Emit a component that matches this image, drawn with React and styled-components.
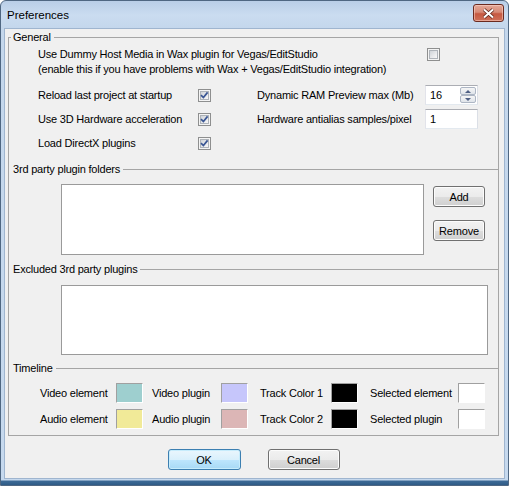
import React from "react";
import styled, { createGlobalStyle } from "styled-components";

const Global = createGlobalStyle`
  html, body {
    margin: 0;
    padding: 0;
    background: #ffffff;
  }
  body {
    font-family: "Liberation Sans", Arial, sans-serif;
    font-size: 11px;
    letter-spacing: -0.2px;
    color: #000;
  }
`;

const Window = styled.div`
  width: 509px;
  height: 486px;
  box-sizing: border-box;
  display: flex;
  flex-direction: column;
  border: 1px solid #4f6782;
  border-radius: 6px 6px 0 0;
  background: linear-gradient(
    to bottom,
    #b9cee7 0px,
    #cadcf0 14px,
    #c4d7ec 27px,
    #c6d9ee calc(100% - 5px),
    #3d6a96 calc(100% - 4px),
    #2f5b86 100%
  );
`;

const TitleBar = styled.div`
  height: 27px;
  flex: none;
  display: flex;
  align-items: flex-start;
  justify-content: space-between;
`;

const Title = styled.div`
  font-size: 11.5px;
  letter-spacing: 0;
  line-height: 14px;
  margin: 7px 0 0 6px;
  color: #000;
`;

const CloseButton = styled.div`
  width: 31px;
  height: 18px;
  margin: 3px 4px 0 0;
  box-sizing: border-box;
  border: 1px solid #6b2a1f;
  border-radius: 3px;
  background: linear-gradient(to bottom, #e4a898 0%, #d78a76 45%, #c65840 55%, #cf715a 100%);
  box-shadow: inset 0 0 0 1px rgba(255, 220, 210, 0.5);
  display: flex;
  align-items: center;
  justify-content: center;
`;

const Client = styled.div`
  flex: 1;
  margin: 0 3px 6px 3px;
  border: 1px solid #9fb5cf;
  background: #f0f0f0;
  padding: 1px 0 0 3px;
  display: flex;
  flex-direction: column;
`;

const Group = styled.fieldset`
  width: 491px;
  box-sizing: border-box;
  margin: 0;
  padding: 0 0 3px 0;
  border: 1px solid #a5a5a5;
  min-width: 0;
`;

const Legend = styled.legend`
  padding: 0 3px 0 2px;
  margin-left: 2px;
  line-height: 14px;
`;

const Divider = styled.div`
  display: flex;
  align-items: center;
  height: 14px;
  margin: ${(p) => p.$top}px 0 0 4px;
  span {
    line-height: 14px;
  }
  &::after {
    content: "";
    flex: 1;
    border-top: 1px solid #a5a5a5;
    margin-left: 3px;
  }
`;

const TopOption = styled.div`
  display: flex;
  align-items: flex-start;
  margin: 3px 0 0 29px;
`;

const TopText = styled.div`
  width: 389px;
  line-height: 15px;
`;

const OptionGrid = styled.div`
  display: grid;
  grid-template-columns: 160px 59px 168px 53px;
  grid-auto-rows: 24px;
  align-items: center;
  margin: 6px 0 0 29px;
`;

const BoxOuter = styled.div`
  width: 13px;
  height: 13px;
  box-sizing: border-box;
  border: 1px solid #8e8f8f;
  background: #f4f4f4;
  padding: 1px;
  margin-top: ${(p) => p.$top || 0}px;
`;

const BoxInner = styled.div`
  width: 9px;
  height: 9px;
  box-sizing: border-box;
  border: 1px solid #aeb3b9;
  background: linear-gradient(135deg, #cfd3d8 0%, #e9eaec 60%, #f7f7f7 100%);
  display: flex;
  align-items: center;
  justify-content: center;
  overflow: visible;
`;

const Check = ({ on, top }) => (
  <BoxOuter $top={top}>
    <BoxInner>
      {on && (
        <svg width="9" height="9" viewBox="0 0 9 9" style={{ overflow: "visible" }}>
          <path d="M1 4.2 L3.4 6.6 L7.6 1.4" fill="none" stroke="#3a5694" strokeWidth="1.7" />
        </svg>
      )}
    </BoxInner>
  </BoxOuter>
);

const TextBox = styled.div`
  height: ${(p) => p.$h || 20}px;
  box-sizing: border-box;
  border: 1px solid;
  border-color: #abadb3 #dbdfe6 #e3e9ef #e2e3ea;
  background: #fff;
  display: flex;
  align-items: stretch;
`;

const TextValue = styled.div`
  flex: 1;
  padding-left: 4px;
  display: flex;
  align-items: center;
`;

const SpinCol = styled.div`
  width: 16px;
  margin: 1px;
  display: flex;
  flex-direction: column;
`;

const SpinBtn = styled.div`
  flex: 1;
  box-sizing: border-box;
  border: 1px solid #adb6c4;
  border-radius: 2px;
  background: linear-gradient(to bottom, #f6f6f6, #dfe4ea);
  display: flex;
  align-items: center;
  justify-content: center;
  &::before {
    content: "";
    border-left: 3px solid transparent;
    border-right: 3px solid transparent;
    ${(p) =>
      p.$down ? "border-top: 3px solid #4e5f83;" : "border-bottom: 3px solid #4e5f83;"}
  }
`;

const FolderRow = styled.div`
  display: flex;
  align-items: flex-start;
  gap: 9px;
  margin: 8px 0 0 52px;
`;

const ListBox = styled.div`
  width: ${(p) => p.$w}px;
  height: ${(p) => p.$h}px;
  box-sizing: border-box;
  border: 1px solid #9a9a9a;
  background: #fff;
  margin-top: ${(p) => p.$top || 0}px;
  margin-left: ${(p) => p.$left || 0}px;
`;

const ButtonCol = styled.div`
  display: flex;
  flex-direction: column;
  gap: 13px;
  padding-top: 2px;
`;

const Button = styled.div`
  width: ${(p) => p.$w || 52}px;
  height: 21px;
  box-sizing: border-box;
  border: 1px solid ${(p) => (p.$default ? "#3c7fb1" : "#707070")};
  border-radius: 3px;
  background: ${(p) =>
    p.$default
      ? "linear-gradient(to bottom, #eaf6fd 0%, #d9f0fc 50%, #bee6fd 51%, #a7d9f5 100%)"
      : "linear-gradient(to bottom, #f2f2f2 0%, #ebebeb 50%, #dddddd 51%, #cfcfcf 100%)"};
  box-shadow: inset 0 0 0 1px ${(p) => (p.$default ? "#c6ecfc" : "#fcfcfc")};
  display: flex;
  align-items: center;
  justify-content: center;
  line-height: 14px;
`;

const ColorGrid = styled.div`
  display: grid;
  grid-template-columns: 76px 36px 69px 39px 71px 39px 88px 27px;
  grid-auto-rows: 26px;
  align-items: center;
  margin: 5px 0 0 31px;
`;

const Swatch = styled.div`
  width: 27px;
  height: 20px;
  box-sizing: border-box;
  border: 1px solid;
  border-color: #a0a0a0 #ffffff #ffffff #a0a0a0;
  background: ${(p) => p.$color};
`;

const Footer = styled.div`
  display: flex;
  justify-content: center;
  gap: 27px;
  margin: 13px 0 0 -5px;
`;

export default function App() {
  return (
    <>
      <Global />
      <Window>
        <TitleBar>
          <Title>Preferences</Title>
          <CloseButton>
            <svg width="13" height="11" viewBox="0 0 13 11">
              <path d="M2 1.5 L11 9.5 M11 1.5 L2 9.5" stroke="#5b2418" strokeWidth="3.6" />
              <path d="M2 1.5 L11 9.5 M11 1.5 L2 9.5" stroke="#ffffff" strokeWidth="2" />
            </svg>
          </CloseButton>
        </TitleBar>
        <Client>
          <Group>
            <Legend>General</Legend>
            <TopOption>
              <TopText>
                Use Dummy Host Media in Wax plugin for Vegas/EditStudio
                <br />
                (enable this if you have problems with Wax + Vegas/EditStudio integration)
              </TopText>
              <Check top={1} />
            </TopOption>
            <OptionGrid>
              <span>Reload last project at startup</span>
              <Check on />
              <span>Dynamic RAM Preview max (Mb)</span>
              <TextBox>
                <TextValue>16</TextValue>
                <SpinCol>
                  <SpinBtn />
                  <SpinBtn $down />
                </SpinCol>
              </TextBox>
              <span>Use 3D Hardware acceleration</span>
              <Check on />
              <span>Hardware antialias samples/pixel</span>
              <TextBox $h={20}>
                <TextValue>1</TextValue>
              </TextBox>
              <span>Load DirectX plugins</span>
              <Check on />
            </OptionGrid>

            <Divider $top={7}>
              <span>3rd party plugin folders</span>
            </Divider>
            <FolderRow>
              <ListBox $w={363} $h={71} />
              <ButtonCol>
                <Button>Add</Button>
                <Button>Remove</Button>
              </ButtonCol>
            </FolderRow>

            <Divider $top={7}>
              <span>Excluded 3rd party plugins</span>
            </Divider>
            <ListBox $w={427} $h={70} $top={9} $left={52} />

            <Divider $top={6}>
              <span>Timeline</span>
            </Divider>
            <ColorGrid>
              <span>Video element</span>
              <Swatch $color="#9ecfcf" />
              <span>Video plugin</span>
              <Swatch $color="#c6c6fb" />
              <span>Track Color 1</span>
              <Swatch $color="#000000" />
              <span>Selected element</span>
              <Swatch $color="#ffffff" />
              <span>Audio element</span>
              <Swatch $color="#f1ea98" />
              <span>Audio plugin</span>
              <Swatch $color="#dcb6b6" />
              <span>Track Color 2</span>
              <Swatch $color="#000000" />
              <span>Selected plugin</span>
              <Swatch $color="#ffffff" />
            </ColorGrid>
          </Group>
          <Footer>
            <Button $default $w={73}>OK</Button>
            <Button $w={72}>Cancel</Button>
          </Footer>
        </Client>
      </Window>
    </>
  );
}
